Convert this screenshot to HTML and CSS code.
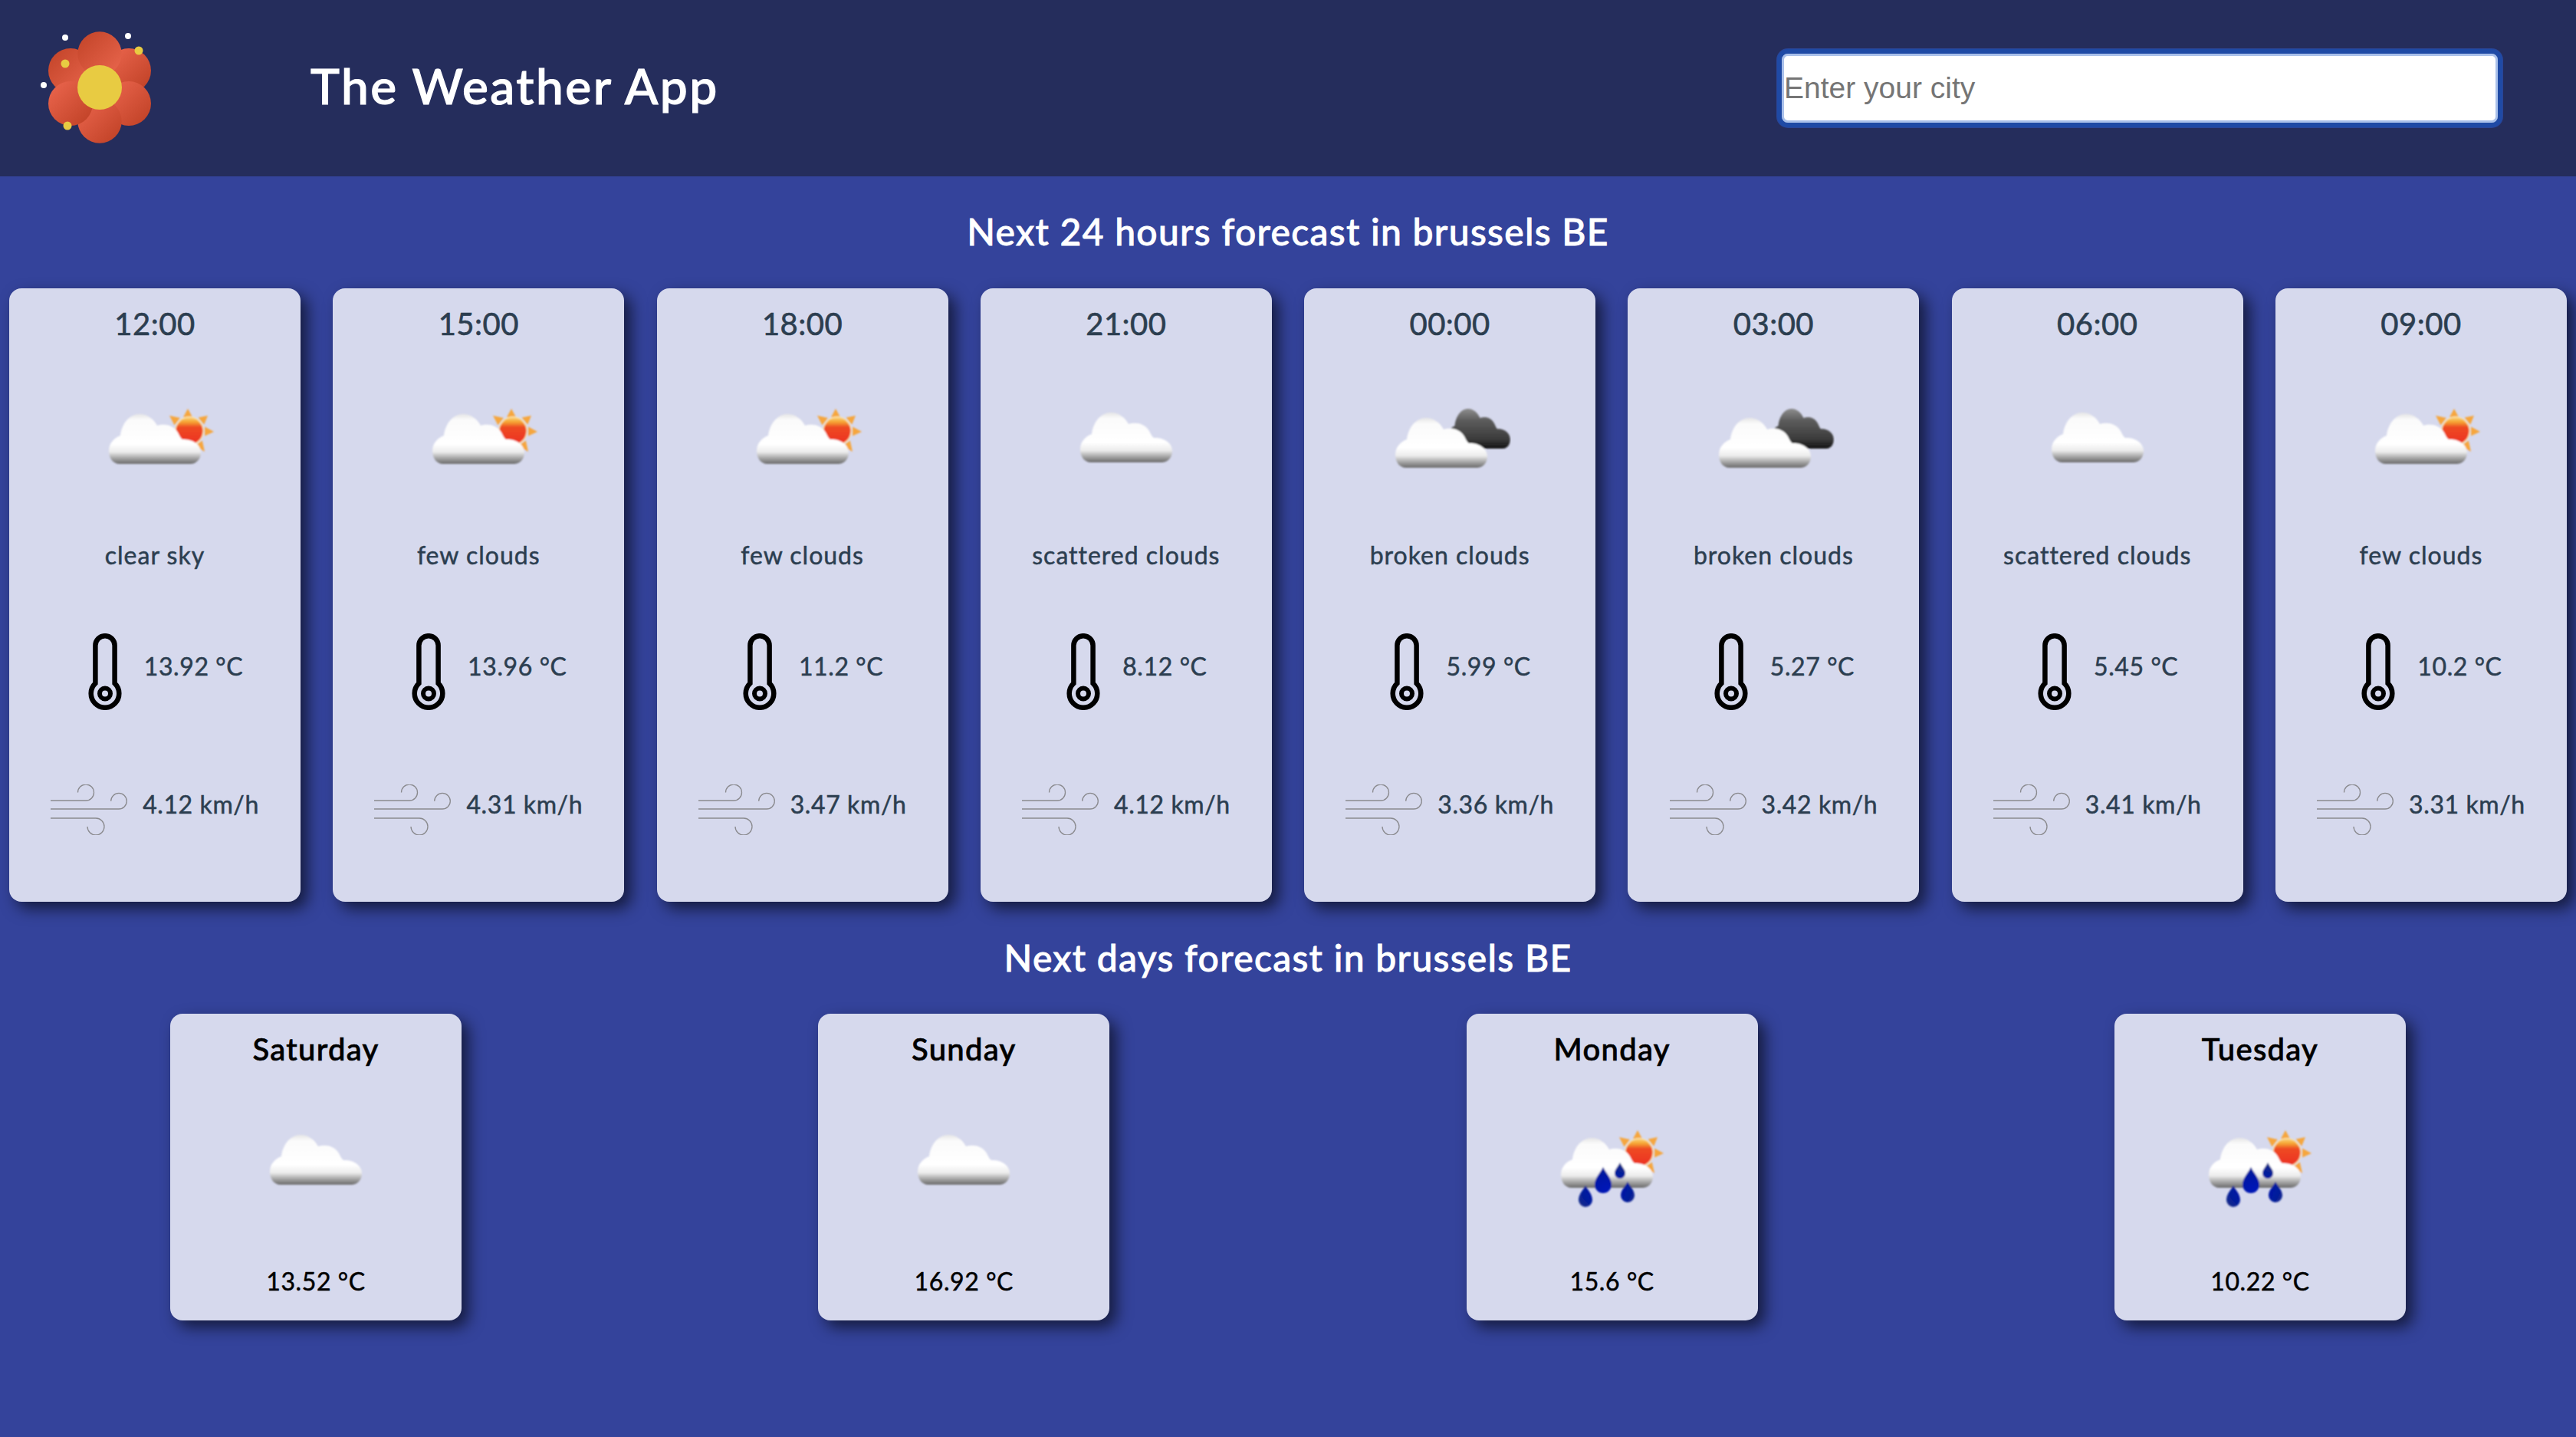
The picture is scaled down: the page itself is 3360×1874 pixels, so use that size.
FILE: index.html
```html
<!DOCTYPE html>
<html lang="en">
<head>
    <meta charset="UTF-8">
    <meta name="viewport" content="width=device-width, initial-scale=1.0">
    <title>The Weather App</title>
    <link rel="stylesheet" href="styles.css">
</head>
<body>
<!-- shared icons -->
<svg class="defs" width="0" height="0" aria-hidden="true">
    <defs>
        <linearGradient id="cloudFill" x1="0" y1="0" x2="0" y2="1">
            <stop offset="0" stop-color="#e6e6e6"/>
            <stop offset="0.12" stop-color="#fbfbfb"/>
            <stop offset="0.6" stop-color="#ffffff"/>
            <stop offset="0.76" stop-color="#ececec"/>
            <stop offset="0.88" stop-color="#a8a8a8"/>
            <stop offset="1" stop-color="#6a6a6a"/>
        </linearGradient>
        <linearGradient id="darkFill" x1="0" y1="0" x2="0" y2="1">
            <stop offset="0" stop-color="#8d8d8d"/>
            <stop offset="0.3" stop-color="#5c5c5c"/>
            <stop offset="0.75" stop-color="#3c3c3c"/>
            <stop offset="1" stop-color="#151515"/>
        </linearGradient>
        <linearGradient id="sunFill" x1="0" y1="0" x2="0" y2="1">
            <stop offset="0" stop-color="#fbd070"/>
            <stop offset="0.18" stop-color="#f5a030"/>
            <stop offset="0.36" stop-color="#ee4a24"/>
            <stop offset="1" stop-color="#ec3020"/>
        </linearGradient>
        <radialGradient id="dropFill" cx="0.5" cy="0.6" r="0.6">
            <stop offset="0" stop-color="#0018b8"/>
            <stop offset="0.7" stop-color="#001a9c"/>
            <stop offset="1" stop-color="#1a2f88"/>
        </radialGradient>
        <linearGradient id="petalA" x1="0.1" y1="0.1" x2="0.9" y2="0.9">
            <stop offset="0" stop-color="#c5462b"/>
            <stop offset="1" stop-color="#e6634a"/>
        </linearGradient>
        <linearGradient id="petalB" x1="0.1" y1="0.1" x2="0.9" y2="0.9">
            <stop offset="0" stop-color="#e8634b"/>
            <stop offset="1" stop-color="#c24328"/>
        </linearGradient>
        <filter id="soft" x="-10%" y="-10%" width="120%" height="120%">
            <feGaussianBlur stdDeviation="1"/>
        </filter>
        <path id="cloudShape" d="M14 65C5 65 0 57 0 48C0 38 7 31 15 28C17 12 27 0 40 0C50 0 58 6 63 15C72 12 84 14 90 24C92 28 94 32 96 33C106 32 120 38 120 50C120 59 114 65 106 65Z"/>
        <g id="sun">
            <path d="M123 43L129 54H117ZM99 52L112.900 55.100L105.500 64.500ZM149 52L144.200 63.800L136.600 54.600ZM157 73L145 78.600V66.600ZM145 99L132.200 91.600L141.800 84.400Z" fill="#f6a63c"/>
            <circle cx="125" cy="72" r="19" fill="#fbe3ae"/>
            <circle cx="125" cy="72" r="17.500" fill="url(#sunFill)"/>
        </g>
        <symbol id="cloud" viewBox="0 0 160 160">
            <g filter="url(#soft)">
                <use href="#cloudShape" x="20" y="48" fill="url(#cloudFill)"/>
            </g>
        </symbol>
        <symbol id="fewClouds" viewBox="0 0 160 160">
            <g filter="url(#soft)">
                <use href="#sun"/>
                <use href="#cloudShape" x="20" y="50" fill="url(#cloudFill)"/>
            </g>
        </symbol>
        <symbol id="brokenClouds" viewBox="0 0 160 160">
            <g filter="url(#soft)">
                <use href="#cloudShape" transform="translate(76 43) scale(0.69 0.8)" fill="url(#darkFill)"/>
                <use href="#cloudShape" x="9" y="55" fill="url(#cloudFill)"/>
            </g>
        </symbol>
        <symbol id="rain" viewBox="0 0 160 160">
            <g filter="url(#soft)">
                <use href="#sun" transform="translate(-10 -1)"/>
                <use href="#cloudShape" x="13" y="52" fill="url(#cloudFill)"/>
                <path d="M68 90C72 98 79 104 79 113A11 11 0 0 1 57 113C57 104 64 98 68 90ZM90 84C93 90 97 93 97 98A7 7 0 0 1 83 98C83 93 87 90 90 84ZM100 109C103 115 109 120 109 127A9 9 0 0 1 91 127C91 120 97 115 100 109ZM45 114C48 120 54 125 54 133A9 9 0 0 1 36 133C36 125 42 120 45 114Z" fill="url(#dropFill)"/>
            </g>
        </symbol>
        <symbol id="thermo" viewBox="0 0 100 100">
            <path d="M37.4 65.2V15.8A12.6 12.6 0 0 1 62.6 15.8V65.2A18.3 18.3 0 1 1 37.4 65.2Z" fill="none" stroke="#000" stroke-width="6.5"/>
            <circle cx="50" cy="78.5" r="7" fill="none" stroke="#000" stroke-width="6"/>
        </symbol>
        <symbol id="windy" viewBox="0 0 100 66">
            <path d="M0 21H46A10.5 10.5 0 1 0 35.5 10.5M0 32H89A10.3 10.3 0 1 0 78.7 21.7M0 44H59A11 11 0 1 1 48 55" fill="none" stroke="#8a8a8e" stroke-width="1.3"/>
        </symbol>
    </defs>
</svg>

<header class="topbar">
    <svg class="logo" viewBox="50 40 150 150" aria-hidden="true">
        <circle cx="168" cy="92" r="29" fill="url(#petalB)"/>
        <circle cx="168" cy="135" r="29" fill="url(#petalB)"/>
        <circle cx="92" cy="92" r="29" fill="url(#petalA)"/>
        <circle cx="130" cy="70" r="28.7" fill="url(#petalA)"/>
        <circle cx="130" cy="158" r="28.7" fill="url(#petalB)"/>
        <circle cx="92" cy="135" r="29" fill="url(#petalB)"/>
        <circle cx="130" cy="114" r="29" fill="#e8cb42"/>
        <circle cx="85" cy="49" r="4" fill="#fff"/>
        <circle cx="167" cy="47" r="4" fill="#fff"/>
        <circle cx="57" cy="111" r="4" fill="#fff"/>
        <circle cx="181" cy="66" r="5.5" fill="#e8cb42"/>
        <circle cx="85" cy="83" r="5.5" fill="#e8cb42"/>
        <circle cx="88" cy="164" r="5.5" fill="#e8cb42"/>
    </svg>
    <h1 class="app-title">The Weather App</h1>
    <input class="city-input" type="text" placeholder="Enter your city">
</header>

<h2 class="section-title first">Next 24 hours forecast in brussels BE</h2>
<section class="hours">
    <div class="card hour">
        <div class="time">12:00</div>
        <svg class="weather"><use href="#fewClouds"/></svg>
        <div class="desc">clear sky</div>
        <div class="stat temp"><svg class="thermo"><use href="#thermo"/></svg><span>13.92 °C</span></div>
        <div class="stat wind"><svg class="windy"><use href="#windy"/></svg><span>4.12 km/h</span></div>
    </div>
    <div class="card hour">
        <div class="time">15:00</div>
        <svg class="weather"><use href="#fewClouds"/></svg>
        <div class="desc">few clouds</div>
        <div class="stat temp"><svg class="thermo"><use href="#thermo"/></svg><span>13.96 °C</span></div>
        <div class="stat wind"><svg class="windy"><use href="#windy"/></svg><span>4.31 km/h</span></div>
    </div>
    <div class="card hour">
        <div class="time">18:00</div>
        <svg class="weather"><use href="#fewClouds"/></svg>
        <div class="desc">few clouds</div>
        <div class="stat temp"><svg class="thermo"><use href="#thermo"/></svg><span>11.2 °C</span></div>
        <div class="stat wind"><svg class="windy"><use href="#windy"/></svg><span>3.47 km/h</span></div>
    </div>
    <div class="card hour">
        <div class="time">21:00</div>
        <svg class="weather"><use href="#cloud"/></svg>
        <div class="desc">scattered clouds</div>
        <div class="stat temp"><svg class="thermo"><use href="#thermo"/></svg><span>8.12 °C</span></div>
        <div class="stat wind"><svg class="windy"><use href="#windy"/></svg><span>4.12 km/h</span></div>
    </div>
    <div class="card hour">
        <div class="time">00:00</div>
        <svg class="weather"><use href="#brokenClouds"/></svg>
        <div class="desc">broken clouds</div>
        <div class="stat temp"><svg class="thermo"><use href="#thermo"/></svg><span>5.99 °C</span></div>
        <div class="stat wind"><svg class="windy"><use href="#windy"/></svg><span>3.36 km/h</span></div>
    </div>
    <div class="card hour">
        <div class="time">03:00</div>
        <svg class="weather"><use href="#brokenClouds"/></svg>
        <div class="desc">broken clouds</div>
        <div class="stat temp"><svg class="thermo"><use href="#thermo"/></svg><span>5.27 °C</span></div>
        <div class="stat wind"><svg class="windy"><use href="#windy"/></svg><span>3.42 km/h</span></div>
    </div>
    <div class="card hour">
        <div class="time">06:00</div>
        <svg class="weather"><use href="#cloud"/></svg>
        <div class="desc">scattered clouds</div>
        <div class="stat temp"><svg class="thermo"><use href="#thermo"/></svg><span>5.45 °C</span></div>
        <div class="stat wind"><svg class="windy"><use href="#windy"/></svg><span>3.41 km/h</span></div>
    </div>
    <div class="card hour">
        <div class="time">09:00</div>
        <svg class="weather"><use href="#fewClouds"/></svg>
        <div class="desc">few clouds</div>
        <div class="stat temp"><svg class="thermo"><use href="#thermo"/></svg><span>10.2 °C</span></div>
        <div class="stat wind"><svg class="windy"><use href="#windy"/></svg><span>3.31 km/h</span></div>
    </div>
</section>

<h2 class="section-title second">Next days forecast in brussels BE</h2>
<section class="days">
    <div class="card day">
        <div class="day-name">Saturday</div>
        <svg class="weather"><use href="#cloud"/></svg>
        <div class="day-temp">13.52 °C</div>
    </div>
    <div class="card day">
        <div class="day-name">Sunday</div>
        <svg class="weather"><use href="#cloud"/></svg>
        <div class="day-temp">16.92 °C</div>
    </div>
    <div class="card day">
        <div class="day-name">Monday</div>
        <svg class="weather"><use href="#rain"/></svg>
        <div class="day-temp">15.6 °C</div>
    </div>
    <div class="card day">
        <div class="day-name">Tuesday</div>
        <svg class="weather"><use href="#rain"/></svg>
        <div class="day-temp">10.22 °C</div>
    </div>
</section>
</body>
</html>
```

FILE: styles.css
```css
body {
    margin: 0;
    min-height: 1874px;
    background-color: #34439b;
    font-family: Lato, "Open Sans", sans-serif;
    color: #2c3e50;
}
.defs {
    display: block;
}
.topbar {
    display: flex;
    align-items: center;
    height: 230px;
    padding: 0 96px 0 50px;
    background-color: #252d5c;
}
.logo {
    width: 150px;
    height: 150px;
}
.app-title {
    flex: 1;
    margin: 0 0 0 205px;
    padding-bottom: 8px;
    font-size: 64px;
    font-weight: 500;
    letter-spacing: 2.5px;
    -webkit-text-stroke: 1.2px #fff;
    color: #fff;
}
.city-input {
    box-sizing: border-box;
    width: 946px;
    height: 102px;
    padding: 0 0 0 3px;
    border: 6px solid #1f4aa5;
    border-radius: 14px;
    box-shadow: inset 0 0 0 3px #a9c0ea, 0 0 0 1px #2a4495;
    background: #fff;
    font-family: "Liberation Sans", Arial, sans-serif;
    font-size: 39px;
    outline: none;
}
.city-input::placeholder {
    color: #757575;
}
.section-title {
    margin: 0;
    font-size: 48px;
    font-weight: 500;
    line-height: 60px;
    letter-spacing: 1.3px;
    -webkit-text-stroke: 0.8px #fff;
    text-align: center;
    color: #fff;
}
.section-title.first {
    padding: 42px 0 44px;
}
.section-title.second {
    padding: 43px 0 43px;
}
.hours {
    display: flex;
    justify-content: space-between;
    padding: 0 12px;
}
.days {
    display: flex;
    justify-content: space-between;
    padding: 0 222px;
}
.card {
    display: flex;
    flex-direction: column;
    align-items: center;
    box-sizing: border-box;
    width: 380px;
    border-radius: 16px;
    background-color: #d6d9ed;
    box-shadow: 9px 9px 20px rgba(0, 0, 0, 0.6);
}
.hour {
    height: 800px;
    padding-top: 22px;
}
.day {
    height: 400px;
    padding-top: 22px;
}
.time {
    font-size: 40px;
    line-height: 48px;
    letter-spacing: 0.5px;
    -webkit-text-stroke: 0.6px #2c3e50;
}
.hour .weather {
    margin-top: 44px;
}
.weather {
    display: block;
    flex: none;
    width: 160px;
    height: 160px;
}
.desc {
    margin-top: 54px;
    font-size: 32px;
    line-height: 40px;
    letter-spacing: 1px;
    -webkit-text-stroke: 0.5px #2c3e50;
}
.stat {
    display: flex;
    align-items: center;
    font-size: 32px;
    letter-spacing: 0.6px;
    -webkit-text-stroke: 0.5px #2c3e50;
}
.stat span {
    padding-bottom: 16px;
}
.temp {
    gap: 1px;
    margin-top: 82px;
}
.wind {
    gap: 20px;
    margin-top: 97px;
}
.thermo {
    width: 100px;
    height: 100px;
}
.windy {
    width: 100px;
    height: 66px;
}
.day-name {
    font-size: 40px;
    line-height: 48px;
    font-weight: 500;
    letter-spacing: 1.3px;
    -webkit-text-stroke: 0.7px #000;
    color: #000;
}
.day .weather {
    margin-top: 40px;
}
.day-temp {
    margin-top: 59px;
    font-size: 32px;
    line-height: 40px;
    letter-spacing: 0.6px;
    -webkit-text-stroke: 0.5px #000;
    color: #000;
}
```
